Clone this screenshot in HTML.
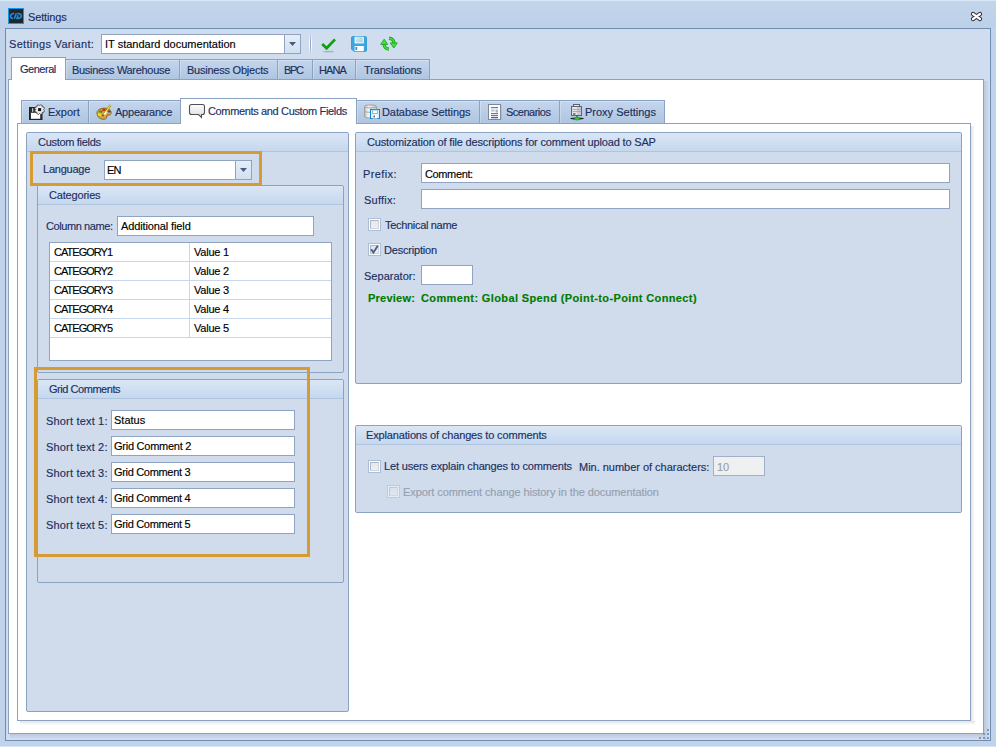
<!DOCTYPE html>
<html><head><meta charset="utf-8">
<style>
*{margin:0;padding:0;box-sizing:border-box}
html,body{width:996px;height:747px;overflow:hidden}
body{position:relative;background:#c1d3ea;font-family:"Liberation Sans",sans-serif;font-size:11px;color:#1b2f5e;-webkit-text-stroke:0.15px currentColor}
.a{position:absolute}
svg{position:absolute;overflow:visible}
.t{position:absolute;white-space:nowrap;line-height:13px;font-size:11px}
.k{color:#000}
.g{color:#007a00}
.dis{color:#98a0aa}
.dis2{color:#95a0ae}
.titlebar{left:0;top:0;width:996px;height:28px;background:linear-gradient(#d9e8f6 0,#d9e8f6 1px,#c3d5eb 1px,#bcd0e8 28px)}
.outer{left:5px;top:28px;width:986px;height:713px;background:#d0ddee;border:1px solid #6f8db1}
.page{position:absolute;background:#fff;border:1px solid #8ba3c3}
.tab{position:absolute;border:1px solid #8ba3c3;border-bottom:none;background:linear-gradient(#c4d6ec,#aec4e0);box-shadow:inset 1px 1px 0 rgba(255,255,255,.25)}
.tabsel{position:absolute;background:#fff;border:1px solid #8ba3c3;border-bottom:none}
.grp{position:absolute;background:#d0dcec;border:1px solid #8ba3c3;border-radius:2px}
.cap{position:absolute;left:0;top:0;right:0;height:19px;background:linear-gradient(#dae6f5,#c6d8ee);border-bottom:1px solid #afc4de;border-radius:1px 1px 0 0}
.tb{position:absolute;background:#fff;border:1px solid #8ea4c2}
.btn{position:absolute;top:0;bottom:0;right:0;width:16px;border-left:1px solid #8ea4c2;background:linear-gradient(#e5eef9,#d3e0f1)}
.btn:after{content:"";position:absolute;left:4px;top:7px;width:7px;height:4px;background:#4a5a80;clip-path:polygon(0 0,100% 0,50% 100%)}
.orange{position:absolute;border:3px solid #d69b32}
.chk{position:absolute;width:13px;height:13px;border:1px solid #a9bedb;background:#fbfcfd;padding:1px}
.chk:after{content:"";display:block;width:9px;height:9px;box-sizing:border-box;border:1px solid #b3b8c0;border-right-color:#d0d3d8;border-bottom-color:#d0d3d8;background:linear-gradient(#e4e6e9,#eef0f2)}
.hl{position:absolute;height:1px;background:#c6d7ec}
</style></head><body>

<div class="a titlebar"></div>
<svg style="left:8px;top:8px" width="16" height="16" viewBox="0 0 16 16">
  <rect x="0" y="0" width="16" height="16" fill="#1797e0"/>
  <rect x="1" y="1" width="14" height="14" fill="#1f2630"/>
  <path d="M6.2 5.5 C4.2 5.2 2.6 6.6 2.5 8.2 C2.4 9.6 3.6 10.6 5.2 10.4" fill="none" stroke="#1e8fd9" stroke-width="1.6"/>
  <path d="M8.4 5.3 L6.3 10.6" fill="none" stroke="#1e8fd9" stroke-width="1.6"/>
  <path d="M9.3 5.6 C11.5 5.3 13.5 6.2 13.3 8 C13.1 9.8 11.2 10.6 9 10.4 L10.2 7.3" fill="none" stroke="#1e8fd9" stroke-width="1.6"/>
</svg>
<svg style="left:970px;top:11px" width="13" height="11" viewBox="0 0 13 11">
  <path d="M3 3 L10 8 M10 3 L3 8" stroke="#2b2b38" stroke-width="4.2" stroke-linecap="round"/>
  <path d="M3 3 L10 8 M10 3 L3 8" stroke="#fff" stroke-width="2.2" stroke-linecap="round"/>
</svg>

<div class="a outer"></div>
<!-- page shadows for General page -->
<div class="a" style="left:984px;top:81px;width:6px;height:659px;background:linear-gradient(90deg,#bcc8d9,#d5e1f1)"></div>
<div class="a" style="left:10px;top:734px;width:974px;height:6px;background:linear-gradient(#bcc8d9,#d5e1f1)"></div>
<div class="a" style="left:0;top:746px;width:996px;height:1px;background:#d6e4f4"></div>

<div class="tb" style="left:101px;top:34px;width:200px;height:20px"><div class="btn"></div></div>
<div class="a" style="left:309px;top:34px;width:1px;height:20px;background:linear-gradient(rgba(255,255,255,0),#fff 40%,#fff 60%,rgba(255,255,255,0))"></div>
<div class="a" style="left:310px;top:34px;width:1px;height:20px;background:linear-gradient(rgba(138,160,192,0),#8aa0c0 40%,#8aa0c0 60%,rgba(138,160,192,0))"></div>
<div class="a" style="left:311px;top:34px;width:1px;height:20px;background:linear-gradient(rgba(255,255,255,0),#fff 40%,#fff 60%,rgba(255,255,255,0))"></div>
<!-- check icon -->
<svg style="left:320px;top:36px" width="17" height="17" viewBox="0 0 17 17">
  <ellipse cx="8.5" cy="15.6" rx="5.5" ry="0.9" fill="#8797ad" opacity=".6"/>
  <path d="M2.2 8 L6.6 12.2 L15 3.4" fill="none" stroke="#12a012" stroke-width="2.8" stroke-linejoin="miter"/>
</svg>
<!-- save icon -->
<svg style="left:351px;top:36px" width="16" height="16" viewBox="0 0 16 16">
  <defs><linearGradient id="shut" x1="0" y1="0" x2="1" y2="1"><stop offset="0" stop-color="#d2ecf8"/><stop offset="1" stop-color="#9ed1ec"/></linearGradient></defs>
  <path d="M1.8 0.5 H14.2 Q15.5 0.5 15.5 1.8 V14.2 Q15.5 15.5 14.2 15.5 H3 L0.5 13 V1.8 Q0.5 0.5 1.8 0.5 Z" fill="#3ea6dc" stroke="#35a0d8" stroke-width="1"/>
  <rect x="3.6" y="0.8" width="9.2" height="6.6" fill="#fff"/>
  <rect x="4.6" y="0.8" width="7.2" height="5.6" fill="url(#shut)"/>
  <rect x="3.6" y="10" width="9.2" height="5.2" fill="#fff"/>
  <rect x="4.4" y="11" width="1.8" height="3" fill="#2f9ad5"/>
</svg>
<!-- refresh icon -->
<svg style="left:380px;top:36px" width="18" height="16" viewBox="0 0 18 16">
  <path d="M9 13.2 C5.6 12.8 3.8 10.8 4.2 8" fill="none" stroke="#18a818" stroke-width="3.2"/>
  <path d="M9 13.2 C5.6 12.8 3.8 10.8 4.2 8" fill="none" stroke="#48e048" stroke-width="1.4"/>
  <path d="M0.7 8.4 L7.7 8.4 L4.2 3.2 Z" fill="#48e048" stroke="#18a818" stroke-width="0.9" stroke-linejoin="round"/>
  <path d="M9 2.2 C12.4 2.6 14.2 4.6 13.8 7.4" fill="none" stroke="#18a818" stroke-width="3.2"/>
  <path d="M9 2.2 C12.4 2.6 14.2 4.6 13.8 7.4" fill="none" stroke="#48e048" stroke-width="1.4"/>
  <path d="M10.3 6.9 L17.3 6.9 L13.8 12 Z" fill="#48e048" stroke="#18a818" stroke-width="0.9" stroke-linejoin="round"/>
</svg>

<!-- top tabs -->
<div class="tab" style="left:65px;top:59px;width:115px;height:21px"></div>
<div class="tab" style="left:179px;top:59px;width:99px;height:21px"></div>
<div class="tab" style="left:277px;top:59px;width:36px;height:21px"></div>
<div class="tab" style="left:312px;top:59px;width:44px;height:21px"></div>
<div class="tab" style="left:355px;top:59px;width:75px;height:21px"></div>

<div class="page" style="left:8px;top:79px;width:976px;height:655px"></div>
<div class="tabsel" style="left:11px;top:57px;width:55px;height:23px"></div>

<!-- inner tabs -->
<div class="tab" style="left:21px;top:100px;width:68px;height:24px"></div>
<div class="tab" style="left:88px;top:100px;width:93px;height:24px"></div>
<div class="tab" style="left:356px;top:100px;width:124px;height:24px"></div>
<div class="tab" style="left:479px;top:100px;width:81px;height:24px"></div>
<div class="tab" style="left:559px;top:100px;width:106px;height:24px"></div>

<div class="page" style="left:17px;top:123px;width:954px;height:598px"></div>
<!-- inner page shadows -->
<div class="a" style="left:971px;top:126px;width:4px;height:596px;background:linear-gradient(90deg,#e4e4e4,rgba(255,255,255,0))"></div>
<div class="a" style="left:20px;top:721px;width:955px;height:4px;background:linear-gradient(#e3e3e3,rgba(255,255,255,0))"></div>
<div class="tabsel" style="left:180px;top:98px;width:177px;height:26px"></div>

<!-- tab icons -->
<svg style="left:29px;top:104px" width="16" height="16" viewBox="0 0 16 16">
  <rect x="0.5" y="3.5" width="12.5" height="12" fill="#2e2e2e" stroke="#222"/>
  <rect x="2" y="8.8" width="9.2" height="6" fill="#fff"/>
  <rect x="3" y="4.2" width="1.3" height="3.6" fill="#c8c8c8"/>
  <path d="M14.50 5.65 L15.41 6.54 L14.66 8.34 L13.39 8.32 L13.32 8.39 L13.34 9.66 L11.54 10.41 L10.65 9.50 L10.55 9.50 L9.66 10.41 L7.86 9.66 L7.88 8.39 L7.81 8.32 L6.54 8.34 L5.79 6.54 L6.70 5.65 L6.70 5.55 L5.79 4.66 L6.54 2.86 L7.81 2.88 L7.88 2.81 L7.86 1.54 L9.66 0.79 L10.55 1.70 L10.65 1.70 L11.54 0.79 L13.34 1.54 L13.32 2.81 L13.39 2.88 L14.66 2.86 L15.41 4.66 L14.50 5.55 Z" fill="#e9e9e9" stroke="#4a4a4a" stroke-width="0.9"/>
  <rect x="9.1" y="4.1" width="3" height="3" fill="#111"/>
</svg>
<svg style="left:96px;top:104px" width="16" height="16" viewBox="0 0 16 16">
  <path d="M1 9.5 C0.6 6.5 3.8 4.3 8 4.2 C12 4.1 15 6 15.2 8.4 C15.4 10.3 13.6 11.4 12 11.2 C11 11.1 10.6 11.7 10.8 12.8 C11 14.5 9 15.6 6.5 15.2 C3.4 14.8 1.3 12.6 1 9.5 Z" fill="#d8a445" stroke="#7a5a1c" stroke-width="0.9"/>
  <ellipse cx="8" cy="5.9" rx="1.9" ry="1.3" fill="#e03010"/>
  <ellipse cx="4.7" cy="7.6" rx="1.8" ry="1.2" fill="#1aa030"/>
  <ellipse cx="3.4" cy="10.6" rx="1.6" ry="1.3" fill="#ffe000"/>
  <ellipse cx="13.2" cy="7.6" rx="1.5" ry="1" fill="#1050d0"/>
  <circle cx="7" cy="11.4" r="0.9" fill="#6a5030"/>
  <path d="M8.5 10 L14.5 1" stroke="#8a7a10" stroke-width="2.2"/>
  <path d="M8.5 10 L14.5 1" stroke="#ffe030" stroke-width="1.2"/>
  <path d="M8.5 10.5 L10.6 7.5" stroke="#fff" stroke-width="1.6"/>
</svg>
<svg style="left:189px;top:103px" width="17" height="17" viewBox="0 0 17 17">
  <defs><linearGradient id="bub" x1="0" y1="0" x2="0" y2="1"><stop offset="0" stop-color="#fdfdfd"/><stop offset="1" stop-color="#dcdcdc"/></linearGradient></defs>
  <path d="M2.5 1.5 H13.5 Q15.5 1.5 15.5 3.5 V9.5 Q15.5 11.5 13.5 11.5 H12.5 V14.5 L9.5 11.5 H2.5 Q0.5 11.5 0.5 9.5 V3.5 Q0.5 1.5 2.5 1.5 Z" fill="url(#bub)" stroke="#505050" stroke-width="1.1"/>
</svg>
<svg style="left:364px;top:104px" width="17" height="16" viewBox="0 0 17 16">
  <defs><linearGradient id="cyl" x1="0" y1="0" x2="1" y2="0"><stop offset="0" stop-color="#b8b8b8"/><stop offset=".3" stop-color="#f4f4f4"/><stop offset="1" stop-color="#c4c4c4"/></linearGradient></defs>
  <path d="M0.5 2.5 C0.5 0.5 12.5 0.5 12.5 2.5 V12.5 C12.5 14.5 0.5 14.5 0.5 12.5 Z" fill="url(#cyl)" stroke="#a0a0a0"/>
  <path d="M0.5 2.5 C0.5 4.3 12.5 4.3 12.5 2.5" fill="none" stroke="#a8a8a8"/>
  <path d="M0.5 7 C0.5 8.8 12.5 8.8 12.5 7" fill="none" stroke="#a8a8a8"/>
  <rect x="6.5" y="5.5" width="9" height="9" fill="#dff0fb" stroke="#1583cc"/>
  <rect x="8.5" y="6" width="5" height="3.5" fill="#fff" stroke="#5ab0e6" stroke-width=".8"/>
  <rect x="8.5" y="10.5" width="5" height="4" fill="#fff"/>
  <rect x="9.6" y="11.5" width="1.2" height="2" fill="#333"/>
</svg>
<svg style="left:488px;top:104px" width="14" height="16" viewBox="0 0 14 16">
  <rect x="0.5" y="0.5" width="12" height="15" fill="#fff" stroke="#7c8898"/>
  <rect x="12.5" y="1" width="1" height="15" fill="#8fa0b4" opacity=".6"/>
  <rect x="3" y="3" width="7" height="1.2" fill="#6878a8"/>
  <rect x="3" y="5.5" width="3.5" height="2" fill="#b8c4d8"/>
  <rect x="7.5" y="5.5" width="2.5" height="3" fill="#a8b6cc"/>
  <rect x="3" y="9" width="7" height="1.2" fill="#6878a8"/>
  <rect x="3" y="11" width="7" height="1.2" fill="#6878a8"/>
  <rect x="3" y="13" width="7" height="1.3" fill="#3a64c8"/>
</svg>
<svg style="left:570px;top:103px" width="15" height="18" viewBox="0 0 15 18">
  <ellipse cx="7" cy="15.5" rx="6.8" ry="1" fill="#111" opacity=".85"/>
  <rect x="3.5" y="1.5" width="6" height="3" fill="#e8e8ee" stroke="#5a6272"/>
  <rect x="1.5" y="3.5" width="10" height="9" fill="#e4e4ea" stroke="#5a6272"/>
  <rect x="7" y="4" width="4" height="8" fill="#c8cad2"/>
  <rect x="2.5" y="6" width="8" height="0.8" fill="#9aa0aa"/>
  <rect x="2.5" y="8" width="8" height="0.8" fill="#9aa0aa"/>
  <rect x="3" y="10" width="2.5" height="2.5" fill="#7a808c"/>
  <rect x="6.3" y="12.5" width="1.4" height="2" fill="#555"/>
  <ellipse cx="7" cy="15.6" rx="2.4" ry="1.5" fill="#2ed02e" stroke="#139013" stroke-width=".6"/>
</svg>

<!-- left group: Custom fields -->
<div class="grp" style="left:26px;top:132px;width:323px;height:580px"><div class="cap"></div></div>
<div class="tb" style="left:104px;top:160px;width:148px;height:20px"><div class="btn"></div></div>

<div class="grp" style="left:37px;top:185px;width:307px;height:188px"><div class="cap"></div></div>
<div class="tb" style="left:117px;top:216px;width:197px;height:20px"></div>
<div class="a" style="left:49px;top:242px;width:283px;height:119px;background:#fff;border:1px solid #8ea4c2"></div>
<div class="hl" style="left:50px;top:261px;width:281px"></div>
<div class="hl" style="left:50px;top:280px;width:281px"></div>
<div class="hl" style="left:50px;top:299px;width:281px"></div>
<div class="hl" style="left:50px;top:318px;width:281px"></div>
<div class="hl" style="left:50px;top:337px;width:281px"></div>
<div class="a" style="left:189px;top:243px;width:1px;height:94px;background:#c6d7ec"></div>

<div class="grp" style="left:37px;top:379px;width:307px;height:204px"><div class="cap"></div></div>
<div class="tb" style="left:111px;top:410px;width:184px;height:20px"></div>
<div class="tb" style="left:111px;top:436px;width:184px;height:20px"></div>
<div class="tb" style="left:111px;top:462px;width:184px;height:20px"></div>
<div class="tb" style="left:111px;top:488px;width:184px;height:20px"></div>
<div class="tb" style="left:111px;top:514px;width:184px;height:20px"></div>

<!-- right groups -->
<div class="grp" style="left:355px;top:132px;width:607px;height:252px"><div class="cap"></div></div>
<div class="tb" style="left:421px;top:163px;width:529px;height:20px"></div>
<div class="tb" style="left:421px;top:189px;width:529px;height:20px"></div>
<div class="chk" style="left:368px;top:218px"></div>
<div class="chk" style="left:368px;top:243px"></div>
<svg style="left:368px;top:243px" width="13" height="13" viewBox="0 0 13 13"><path d="M3.2 6.3 L5.4 9.6 L9.8 2.8" fill="none" stroke="#4a6088" stroke-width="1.9"/></svg>
<div class="tb" style="left:421px;top:265px;width:52px;height:20px"></div>

<div class="grp" style="left:355px;top:425px;width:607px;height:88px"><div class="cap"></div></div>
<div class="chk" style="left:368px;top:460px"></div>
<div class="tb" style="left:713px;top:456px;width:52px;height:20px;background:#eff0f2;border-color:#9fb0c8"></div>
<div class="chk" style="left:387px;top:485px;opacity:.55"></div>

<div class="t" style="left:28px;top:11px;letter-spacing:-0.16px">Settings</div>
<div class="t" style="left:9px;top:38px;letter-spacing:0.31px">Settings Variant:</div>
<div class="t k" style="left:105px;top:38px">IT standard documentation</div>
<div class="t" style="left:20px;top:63px;letter-spacing:-0.48px">General</div>
<div class="t" style="left:72px;top:64px;letter-spacing:-0.31px">Business Warehouse</div>
<div class="t" style="left:187px;top:64px;letter-spacing:-0.23px">Business Objects</div>
<div class="t" style="left:284px;top:64px;letter-spacing:-1.35px">BPC</div>
<div class="t" style="left:319px;top:64px;letter-spacing:-0.90px">HANA</div>
<div class="t" style="left:364px;top:64px;letter-spacing:-0.15px">Translations</div>
<div class="t" style="left:48px;top:106px">Export</div>
<div class="t" style="left:115px;top:106px;letter-spacing:-0.23px">Appearance</div>
<div class="t" style="left:208px;top:105px;letter-spacing:-0.35px">Comments and Custom Fields</div>
<div class="t" style="left:382px;top:106px;letter-spacing:-0.09px">Database Settings</div>
<div class="t" style="left:506px;top:106px;letter-spacing:-0.50px">Scenarios</div>
<div class="t" style="left:585px;top:106px">Proxy Settings</div>
<div class="t" style="left:38px;top:136px;letter-spacing:-0.30px">Custom fields</div>
<div class="t" style="left:43px;top:163px;letter-spacing:-0.24px">Language</div>
<div class="t k" style="left:107px;top:164px;letter-spacing:-0.80px">EN</div>
<div class="t" style="left:49px;top:189px;letter-spacing:-0.18px">Categories</div>
<div class="t" style="left:46px;top:220px;letter-spacing:-0.41px">Column name:</div>
<div class="t k" style="left:121px;top:220px;letter-spacing:-0.12px">Additional field</div>
<div class="t k" style="left:54px;top:246px;letter-spacing:-0.97px">CATEGORY1</div>
<div class="t k" style="left:194px;top:246px;letter-spacing:-0.23px">Value 1</div>
<div class="t k" style="left:54px;top:265px;letter-spacing:-0.97px">CATEGORY2</div>
<div class="t k" style="left:194px;top:265px;letter-spacing:-0.23px">Value 2</div>
<div class="t k" style="left:54px;top:284px;letter-spacing:-0.97px">CATEGORY3</div>
<div class="t k" style="left:194px;top:284px;letter-spacing:-0.23px">Value 3</div>
<div class="t k" style="left:54px;top:303px;letter-spacing:-0.97px">CATEGORY4</div>
<div class="t k" style="left:194px;top:303px;letter-spacing:-0.23px">Value 4</div>
<div class="t k" style="left:54px;top:322px;letter-spacing:-0.97px">CATEGORY5</div>
<div class="t k" style="left:194px;top:322px;letter-spacing:-0.23px">Value 5</div>
<div class="t" style="left:49px;top:383px;letter-spacing:-0.46px">Grid Comments</div>
<div class="t" style="left:46px;top:415px;letter-spacing:0.18px">Short text 1:</div>
<div class="t k" style="left:114px;top:414px">Status</div>
<div class="t" style="left:46px;top:441px;letter-spacing:0.18px">Short text 2:</div>
<div class="t k" style="left:114px;top:440px;letter-spacing:-0.25px">Grid Comment 2</div>
<div class="t" style="left:46px;top:467px;letter-spacing:0.18px">Short text 3:</div>
<div class="t k" style="left:114px;top:466px;letter-spacing:-0.32px">Grid Comment 3</div>
<div class="t" style="left:46px;top:493px;letter-spacing:0.18px">Short text 4:</div>
<div class="t k" style="left:114px;top:492px;letter-spacing:-0.32px">Grid Comment 4</div>
<div class="t" style="left:46px;top:519px;letter-spacing:0.18px">Short text 5:</div>
<div class="t k" style="left:114px;top:518px;letter-spacing:-0.32px">Grid Comment 5</div>
<div class="t" style="left:367px;top:136px;letter-spacing:-0.16px">Customization of file descriptions for comment upload to SAP</div>
<div class="t" style="left:363px;top:168px;letter-spacing:0.38px">Prefix:</div>
<div class="t k" style="left:425px;top:168px;letter-spacing:-0.37px">Comment:</div>
<div class="t" style="left:364px;top:194px;letter-spacing:0.22px">Suffix:</div>
<div class="t" style="left:385px;top:219px;letter-spacing:-0.31px">Technical name</div>
<div class="t" style="left:384px;top:244px;letter-spacing:-0.20px">Description</div>
<div class="t" style="left:364px;top:270px;letter-spacing:0.02px">Separator:</div>
<div class="t g" style="left:368px;top:292px;letter-spacing:0.23px;font-weight:bold">Preview:</div>
<div class="t g" style="left:421px;top:292px;letter-spacing:0.38px;font-weight:bold">Comment: Global Spend (Point-to-Point Connect)</div>
<div class="t" style="left:366px;top:429px;letter-spacing:-0.15px">Explanations of changes to comments</div>
<div class="t" style="left:384px;top:460px;letter-spacing:-0.16px">Let users explain changes to comments</div>
<div class="t" style="left:579px;top:461px;letter-spacing:-0.02px">Min. number of characters:</div>
<div class="t dis" style="left:717px;top:461px">10</div>
<div class="t dis2" style="left:403px;top:486px;letter-spacing:-0.08px">Export comment change history in the documentation</div>

<!-- orange highlight boxes -->
<div class="orange" style="left:30px;top:151px;width:232px;height:35px"></div>
<div class="orange" style="left:34px;top:367px;width:276px;height:190px"></div>

<!-- size grip -->
<div class="a" style="left:987px;top:729px;width:2px;height:2px;background:#7f98b8"></div>
<div class="a" style="left:983px;top:733px;width:2px;height:2px;background:#7f98b8"></div>
<div class="a" style="left:987px;top:733px;width:2px;height:2px;background:#7f98b8"></div>
<div class="a" style="left:979px;top:737px;width:2px;height:2px;background:#7f98b8"></div>
<div class="a" style="left:983px;top:737px;width:2px;height:2px;background:#7f98b8"></div>
<div class="a" style="left:987px;top:737px;width:2px;height:2px;background:#7f98b8"></div>
</body></html>
